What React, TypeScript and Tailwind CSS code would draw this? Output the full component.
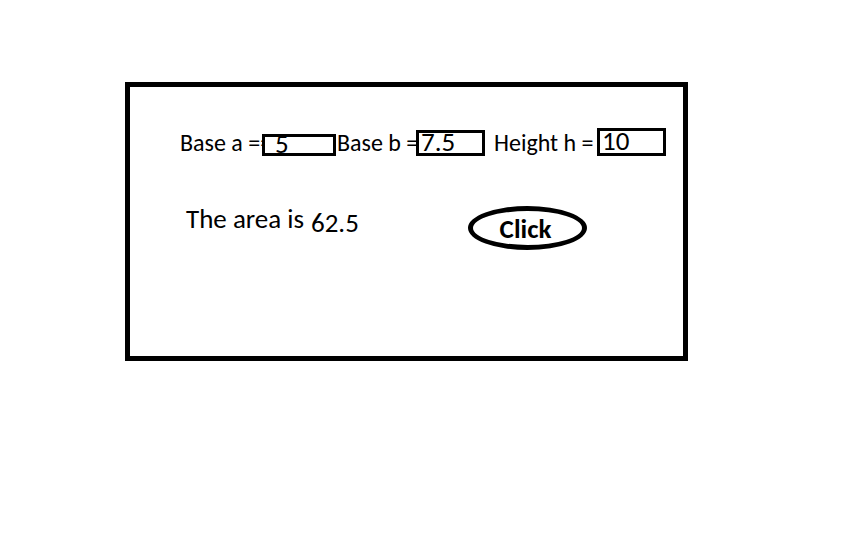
import { useState } from "react";

const toNumber = (value: string) => Number(value) || 0;

const labelStyle = "h-7 shrink-0 whitespace-pre pl-px text-2xl leading-[30px]";
const inputStyle =
  "block min-w-0 rounded-none border-3 border-black bg-white p-0 pb-[3px] text-[27px] leading-5 text-black outline-none";

export default function App() {
  const [a, setA] = useState("5");
  const [b, setB] = useState("7.5");
  const [h, setH] = useState("10");
  const [area, setArea] = useState(62.5);

  const calculate = () => setArea(((toNumber(a) + toNumber(b)) * toNumber(h)) / 2);

  return (
    <main className="min-h-screen bg-white pt-[82px] pr-44 pl-[125px] font-['Carlito','Lato',sans-serif] text-black">
      <form
        className="border-5 border-black pt-[41px] pb-[106px]"
        onSubmit={(event) => {
          event.preventDefault();
          calculate();
        }}
      >
        <div className="flex items-end pl-[49px]">
          <label htmlFor="base-a" className={`${labelStyle} w-[83px]`}>
            Base a ==
          </label>
          <input
            id="base-a"
            className={`${inputStyle} h-[22px] w-[74px] pl-[10px]`}
            value={a}
            onChange={(event) => setA(event.target.value)}
          />
          <label htmlFor="base-b" className={`${labelStyle} w-20`}>
            Base b =
          </label>
          <input
            id="base-b"
            className={`${inputStyle} h-[26px] w-[69px] pl-[2px]`}
            value={b}
            onChange={(event) => setB(event.target.value)}
          />
          <label htmlFor="height-h" className={`${labelStyle} ml-2 w-26`}>
            Height h =
          </label>
          <input
            id="height-h"
            className={`${inputStyle} h-7 w-[69px] pl-[2px]`}
            value={h}
            onChange={(event) => setH(event.target.value)}
          />
        </div>

        <div className="mt-12 flex items-start pl-14">
          <p className="w-[125px] text-[27px] leading-[30px]">The area is</p>
          <output htmlFor="base-a base-b height-h" className="mt-1 w-[157px] text-[27px] leading-[30px]">
            {area}
          </output>
          <button
            type="submit"
            className="mt-0.5 h-11 w-[119px] rounded-[50%] border-5 border-black bg-white pt-0.5 pr-1 text-[27px] leading-[30px] font-bold"
          >
            Click
          </button>
        </div>
      </form>
    </main>
  );
}
